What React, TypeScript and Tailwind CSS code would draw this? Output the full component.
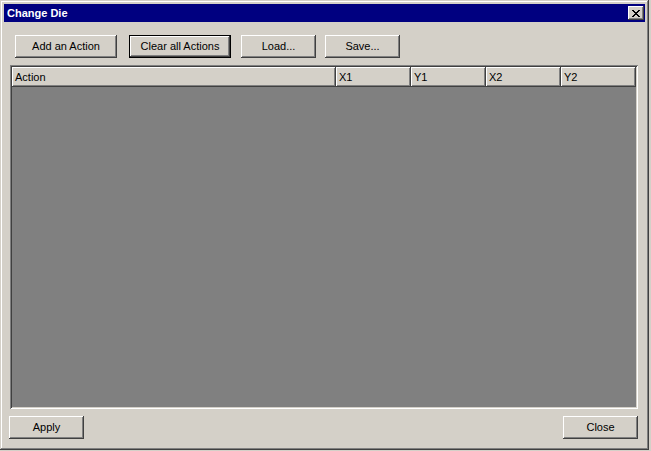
import React from 'react';

const font = { fontFamily: '"Liberation Sans", Arial, sans-serif' };

const Button: React.FC<{ label: string; w: string; isDefault?: boolean }> = ({ label, w, isDefault }) => (
    <button
        className={`${w} h-[23px] text-[11px] text-black bg-[#d4d0c8] flex items-center justify-center ${
            isDefault
                ? 'border border-black shadow-[inset_-1px_-1px_#404040,inset_1px_1px_#fff,inset_-2px_-2px_#808080]'
                : 'shadow-[inset_-1px_-1px_#404040,inset_1px_1px_#fff,inset_-2px_-2px_#808080]'
        }`}
    >
        {label}
    </button>
);

const HeaderCell: React.FC<{ label: string; w: string }> = ({ label, w }) => (
    <div className={`${w} h-full flex items-center pl-[3px] text-[11px] text-black shadow-[inset_-1px_-1px_#404040,inset_1px_1px_#fff,inset_-2px_-2px_#808080]`}>
        {label}
    </div>
);

export default function App() {
    return (
        <div className="w-[651px] h-[451px] bg-[#d4d0c8]" style={font}>
            <div className="w-[649px] h-[450px] bg-[#d4d0c8] p-[2px] flex flex-col shadow-[inset_-1px_-1px_#404040,inset_1px_1px_#d4d0c8,inset_-2px_-2px_#808080,inset_2px_2px_#fff]">
                <div className="m-[2px] h-[18px] bg-[#000080] flex items-center justify-between pl-[3px] pr-[1px]">
                    <span className="text-white font-bold text-[11px]">Change Die</span>
                    <div className="w-[16px] h-[14px] bg-[#d4d0c8] flex items-center justify-center shadow-[inset_-1px_-1px_#404040,inset_1px_1px_#fff,inset_-2px_-2px_#808080]">
                        <svg width="8" height="7" viewBox="0 0 8 7">
                            <path d="M0 0h2v1h1v1h2V1h1V0h2v1H7v1H6v1H5v1h1v1h1v1h1v1H6V6H5V5H3v1H2v1H0V6h1V5h1V4h1V3H2V2H1V1H0z" fill="#000" />
                        </svg>
                    </div>
                </div>
                <div className="flex-1 flex flex-col pl-[8px]">
                    <div className="flex gap-[12px] pl-[5px] mt-[11px]">
                        <Button label="Add an Action" w="w-[102px]" />
                        <Button label="Clear all Actions" w="w-[102px]" isDefault />
                        <div className="flex gap-[9px] ml-[-2px]">
                            <Button label="Load..." w="w-[75px]" />
                            <Button label="Save..." w="w-[75px]" />
                        </div>
                    </div>
                    <div className="mt-[7px] h-[344px] w-[628px] bg-[#808080] p-[2px] flex flex-col shadow-[inset_1px_1px_#808080,inset_-1px_-1px_#fff,inset_2px_2px_#404040,inset_-2px_-2px_#d4d0c8]">
                        <div className="h-[20px] flex bg-[#d4d0c8] shrink-0">
                            <HeaderCell label="Action" w="w-[324px]" />
                            <HeaderCell label="X1" w="w-[75px]" />
                            <HeaderCell label="Y1" w="w-[75px]" />
                            <HeaderCell label="X2" w="w-[75px]" />
                            <HeaderCell label="Y2" w="w-[75px]" />
                        </div>
                    </div>
                    <div className="mt-[7px] w-[629px] ml-[-1px] flex justify-between">
                        <Button label="Apply" w="w-[75px]" />
                        <Button label="Close" w="w-[75px]" />
                    </div>
                </div>
            </div>
        </div>
    );
}
